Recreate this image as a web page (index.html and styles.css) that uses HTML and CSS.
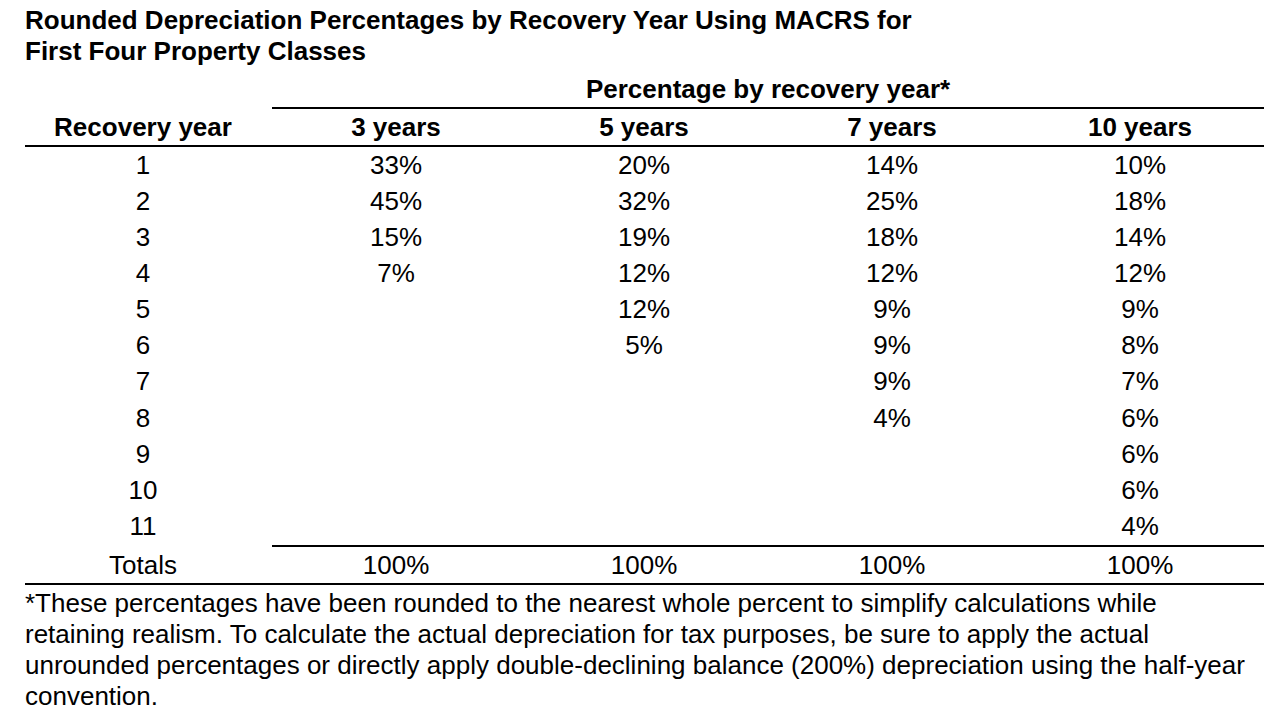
FILE: index.html
```html
<!DOCTYPE html>
<html lang="en">
<head>
<meta charset="utf-8">
<title>MACRS Rounded Depreciation Percentages</title>
<link rel="stylesheet" href="styles.css">
</head>
<body>
<div class="page">
  <h1 class="title">Rounded Depreciation Percentages by Recovery Year Using MACRS for<br>First Four Property Classes</h1>
  <table class="macrs">
    <colgroup>
      <col class="col-year">
      <col class="col-pct">
      <col class="col-pct">
      <col class="col-pct">
      <col class="col-pct">
    </colgroup>
    <thead>
      <tr class="span-row">
        <th class="blank"></th>
        <th class="spanner" colspan="4">Percentage by recovery year*</th>
      </tr>
      <tr class="head-row">
        <th class="year">Recovery year</th>
        <th>3 years</th>
        <th>5 years</th>
        <th>7 years</th>
        <th>10 years</th>
      </tr>
    </thead>
    <tbody>
      <tr><td class="year">1</td><td>33%</td><td>20%</td><td>14%</td><td>10%</td></tr>
      <tr><td class="year">2</td><td>45%</td><td>32%</td><td>25%</td><td>18%</td></tr>
      <tr><td class="year">3</td><td>15%</td><td>19%</td><td>18%</td><td>14%</td></tr>
      <tr><td class="year">4</td><td>7%</td><td>12%</td><td>12%</td><td>12%</td></tr>
      <tr><td class="year">5</td><td></td><td>12%</td><td>9%</td><td>9%</td></tr>
      <tr><td class="year">6</td><td></td><td>5%</td><td>9%</td><td>8%</td></tr>
      <tr><td class="year">7</td><td></td><td></td><td>9%</td><td>7%</td></tr>
      <tr class="shift"><td class="year">8</td><td></td><td></td><td>4%</td><td>6%</td></tr>
      <tr><td class="year">9</td><td></td><td></td><td></td><td>6%</td></tr>
      <tr><td class="year">10</td><td></td><td></td><td></td><td>6%</td></tr>
      <tr class="last"><td class="year">11</td><td></td><td></td><td></td><td>4%</td></tr>
    </tbody>
    <tfoot>
      <tr class="totals">
        <td class="year">Totals</td>
        <td>100%</td>
        <td>100%</td>
        <td>100%</td>
        <td>100%</td>
      </tr>
    </tfoot>
  </table>
  <p class="note">*These percentages have been rounded to the nearest whole percent to simplify calculations while retaining realism. To calculate the actual depreciation for tax purposes, be sure to apply the actual unrounded percentages or directly apply double-declining balance (200%) depreciation using the half-year convention.</p>
</div>
</body>
</html>
```
FILE: styles.css
```css
html, body {
  margin: 0;
  padding: 0;
  background: #ffffff;
}

body {
  font-family: "Liberation Sans", Arial, Helvetica, sans-serif;
  font-size: 26px;
  color: #000000;
}

.page {
  padding: 5px 0 0 25px;
  width: 1239px;
}

.title {
  margin: 0;
  font-size: 26px;
  font-weight: bold;
  line-height: 31px;
}

.macrs {
  border-collapse: separate;
  border-spacing: 0;
  width: 1239px;
  table-layout: fixed;
}

.col-year {
  width: 247px;
}

.col-pct {
  width: 248px;
}

.macrs th,
.macrs td {
  padding: 0;
  text-align: center;
  vertical-align: middle;
  line-height: 36px;
  font-size: 26px;
}

.macrs th {
  font-weight: bold;
}

.macrs .year {
  padding-right: 11px;
}

.span-row .spanner {
  padding-top: 4px;
  border-bottom: 2px solid #000000;
}

.head-row th {
  border-bottom: 2px solid #000000;
}

.macrs tr.shift td {
  padding-top: 1px;
}

.macrs tr.last td {
  padding-bottom: 1px;
}

.totals td {
  border-top: 2px solid #000000;
  border-bottom: 2px solid #000000;
}

.totals td.year {
  border-top-color: transparent;
}

.note {
  margin: 0;
  padding-top: 3px;
  width: 1230px;
  font-size: 26px;
  line-height: 31px;
}
```
